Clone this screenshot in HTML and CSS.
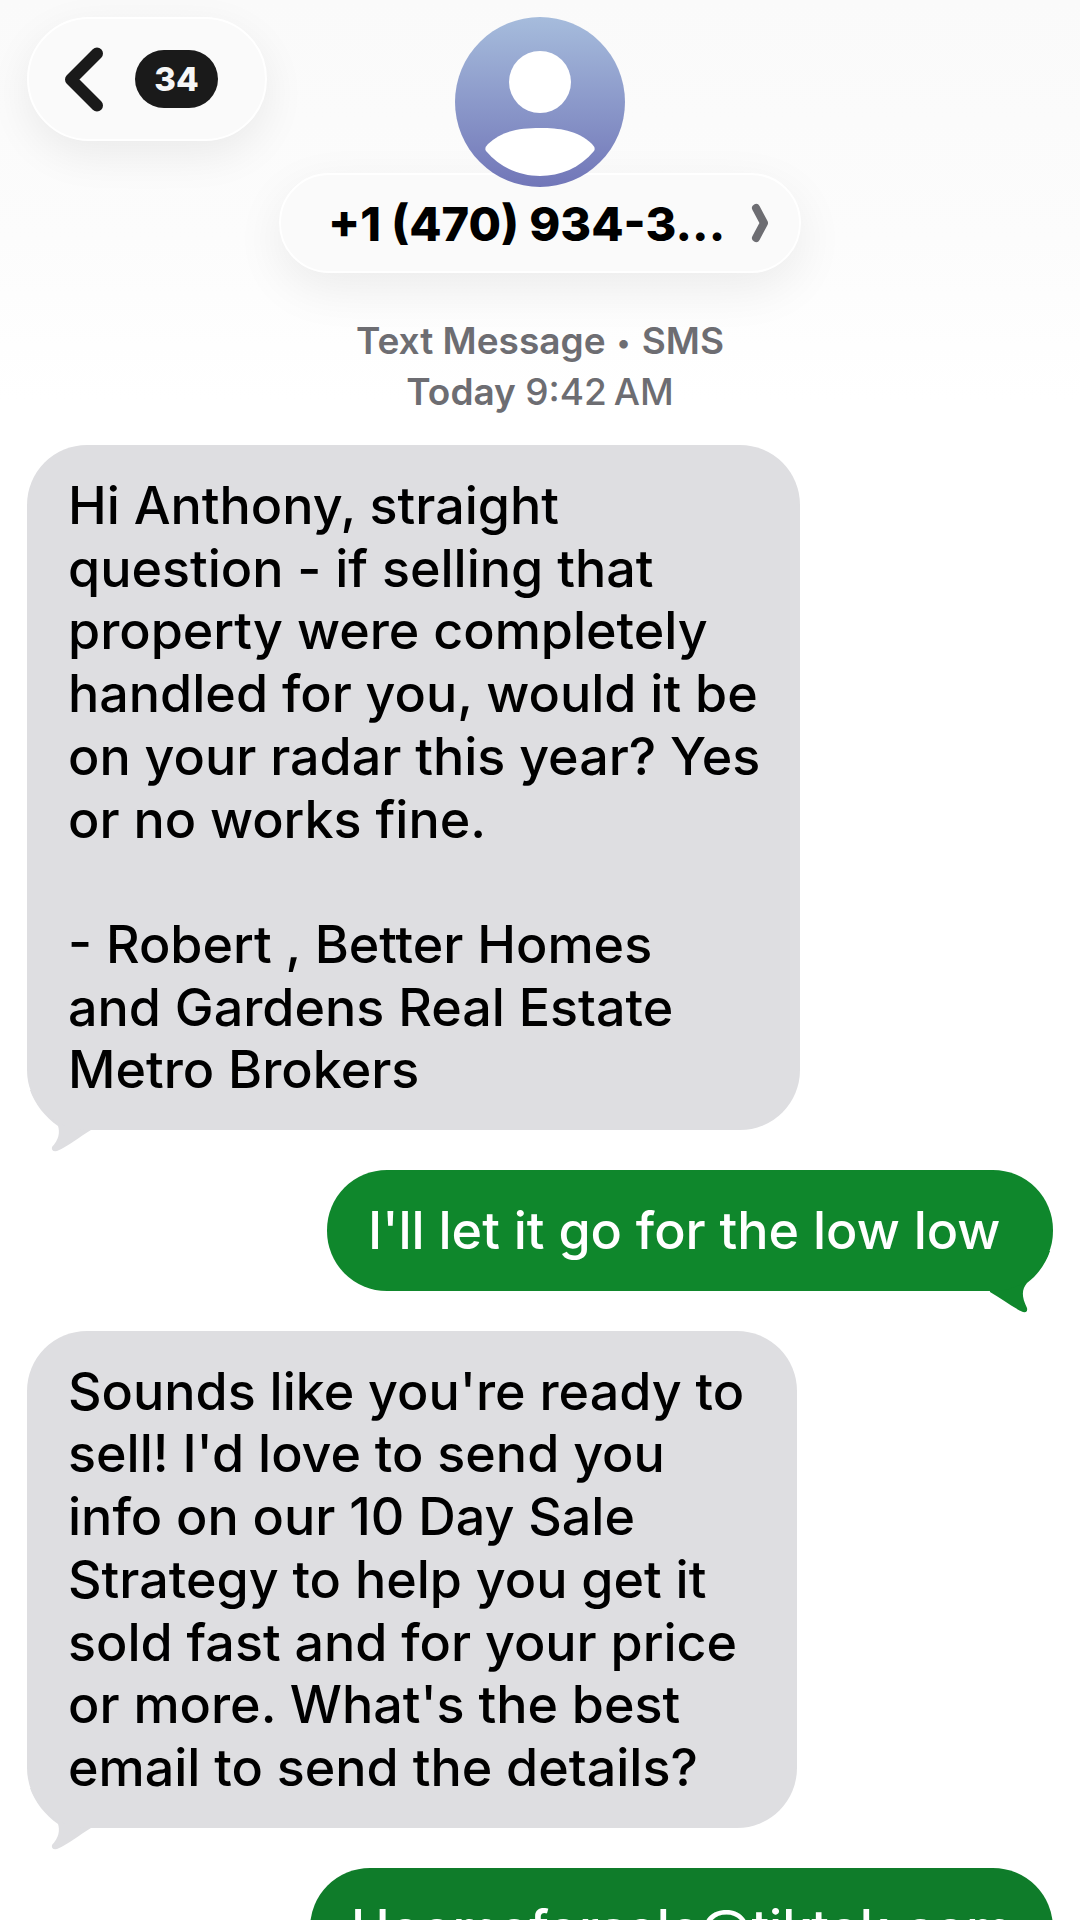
FILE: index.html
```html
<!doctype html>
<html lang="en">
  <head>
    <meta charset="UTF-8" />
    <meta name="viewport" content="width=device-width, initial-scale=1.0" />
    <title>Messages</title>
    <link rel="stylesheet" href="styles.css">
  </head>
  <body>
    <div class="screen">
      <header class="top">
        <a class="back" href="#">
          <svg class="back-icon" viewBox="0 0 40 65" width="40" height="65">
            <path d="M33 6.500 L7 32.500 L33 58.500" fill="none" stroke="#1a1a1a" stroke-width="12" stroke-linecap="round" stroke-linejoin="round" />
          </svg>
          <span class="badge">34</span>
        </a>
        <svg class="avatar" viewBox="0 0 170 170" width="170" height="170">
          <defs>
            <linearGradient id="avatarFill" x1="0" y1="0" x2="0" y2="1">
              <stop offset="0" stop-color="#a6bcdc" />
              <stop offset="1" stop-color="#7176b8" />
            </linearGradient>
          </defs>
          <circle cx="85" cy="85" r="85" fill="url(#avatarFill)" />
          <circle cx="85" cy="65" r="31" fill="#fff" />
          <path d="M31 134 Q29 131 33 127 C48 113 66 111 85 111 C104 111 122 113 137 127 Q141 131 139 134 C125 151 105 159 85 159 C65 159 45 151 31 134 Z" fill="#fff" />
        </svg>
        <a class="name" href="#">
          <span class="name-text">+1 (470) 934-3...</span>
          <svg class="name-arrow" viewBox="0 0 18 44" width="18" height="44">
            <path d="M5 7 L13 22 L5 37" fill="none" stroke="#6d6d72" stroke-width="8" stroke-linecap="round" stroke-linejoin="round" />
          </svg>
        </a>
        <p class="meta">
          Text Message <span class="meta-dot">&bull;</span> SMS<br>
          Today <span class="meta-time">9:42 AM</span>
        </p>
      </header>

      <main class="thread">
        <div class="bubble them first">
          Hi Anthony, straight<br>
          question - if selling that<br>
          property were completely<br>
          handled for you, would it be<br>
          on your radar this year? Yes<br>
          or no works fine.<br>
          <br>
          - Robert , Better Homes<br>
          and Gardens Real Estate<br>
          Metro Brokers
          <svg class="tail tail-them" viewBox="0 0 70 70" width="70" height="70">
            <path d="M3 0 C8 14 18 27 31 36 C33 42 32 50 25 57 Q24 62 30 61 C42 56 52 47 64 40 L68 0 Z" fill="#dedee1" />
          </svg>
        </div>

        <div class="bubble me low">
          I'll let it go for the low low
          <svg class="tail tail-me" viewBox="0 0 70 70" width="70" height="70">
            <path d="M66 0 C62 12 54 24 43 32 C38 38 37 45 43 57 Q44 62 39 61 C28 56 18 48 6 41 L2 0 Z" fill="#0f872c" />
          </svg>
        </div>

        <div class="bubble them second">
          Sounds like you're ready to<br>
          sell! I'd love to send you<br>
          info on our 10 Day Sale<br>
          Strategy to help you get it<br>
          sold fast and for your price<br>
          or more. What's the best<br>
          email to send the details?
          <svg class="tail tail-them" viewBox="0 0 70 70" width="70" height="70">
            <path d="M3 0 C8 14 18 27 31 36 C33 42 32 50 25 57 Q24 62 30 61 C42 56 52 47 64 40 L68 0 Z" fill="#dedee1" />
          </svg>
        </div>

        <div class="bubble me address">Hoomeforsale@tiktok.com</div>
      </main>
    </div>
  </body>
</html>
```

FILE: styles.css
```css
body {
  margin: 0;
  background-color: #fff;
  font-family: Inter, "Noto Sans", sans-serif;
}
a {
  color: inherit;
  text-decoration: none;
}
.screen {
  height: 1920px;
  overflow: hidden;
}

/* floating header */
.top {
  display: flex;
  flex-direction: column;
  align-items: center;
  padding-top: 17px;
  background: linear-gradient(#fafafa 0, #fcfcfc 240px, #fff 400px);
}
.back {
  position: absolute;
  left: 27px;
  top: 17px;
  box-sizing: border-box;
  width: 240px;
  height: 124px;
  display: flex;
  align-items: center;
  padding-left: 35px;
  gap: 31px;
  background: #fafafa;
  border: 2px solid #fff;
  border-radius: 62px;
  box-shadow: 0 14px 44px rgba(0, 0, 0, 0.07);
}
.badge {
  width: 83px;
  height: 58px;
  border-radius: 29px;
  background: #1a1a1a;
  color: #f6f6f6;
  font-size: 33px;
  font-weight: 800;
  line-height: 58px;
  text-align: center;
}
.avatar {
  position: relative;
  z-index: 1;
  display: block;
}
.name {
  box-sizing: border-box;
  width: 522px;
  height: 100px;
  margin-top: -14px;
  padding: 0 30px 0 47px;
  display: flex;
  align-items: center;
  justify-content: space-between;
  background: #fafafa;
  border: 2px solid #fff;
  border-radius: 50px;
  box-shadow: 0 16px 50px rgba(0, 0, 0, 0.07);
}
.name-text {
  font-size: 47px;
  font-weight: 800;
  color: #000;
  white-space: nowrap;
}
.meta {
  margin: 42px 0 28px;
  font-size: 37px;
  font-weight: 600;
  line-height: 51px;
  color: #6d6d72;
  text-align: center;
}
.meta-dot {
  padding: 0 2px;
  font-size: 27px;
  line-height: 0;
  vertical-align: 2px;
}
.meta-time {
  font-weight: 500;
  word-spacing: -3px;
}

/* messages */
.thread {
  display: flex;
  flex-direction: column;
  gap: 40px;
  padding: 0 27px;
}
.bubble {
  position: relative;
  box-sizing: border-box;
  padding: 30px 0 28px 41px;
  border-radius: 60px;
  font-size: 52px;
  font-weight: 500;
  line-height: 62.700px;
  white-space: nowrap;
}
.them {
  align-self: flex-start;
  background: #dedee1;
  color: #000;
}
.me {
  align-self: flex-end;
  background: #0f872c;
  color: #fff;
}
.first {
  width: 773px;
}
.second {
  width: 770px;
}
.low {
  width: 726px;
}
.address {
  width: 743px;
  height: 200px;
  background: #0f7c2a;
}
/* tails sit behind their bubble so the text stays on top */
.tail {
  position: absolute;
  z-index: -1;
  bottom: -30px;
}
.tail-them {
  left: 0;
}
.tail-me {
  right: -1px;
}
```
